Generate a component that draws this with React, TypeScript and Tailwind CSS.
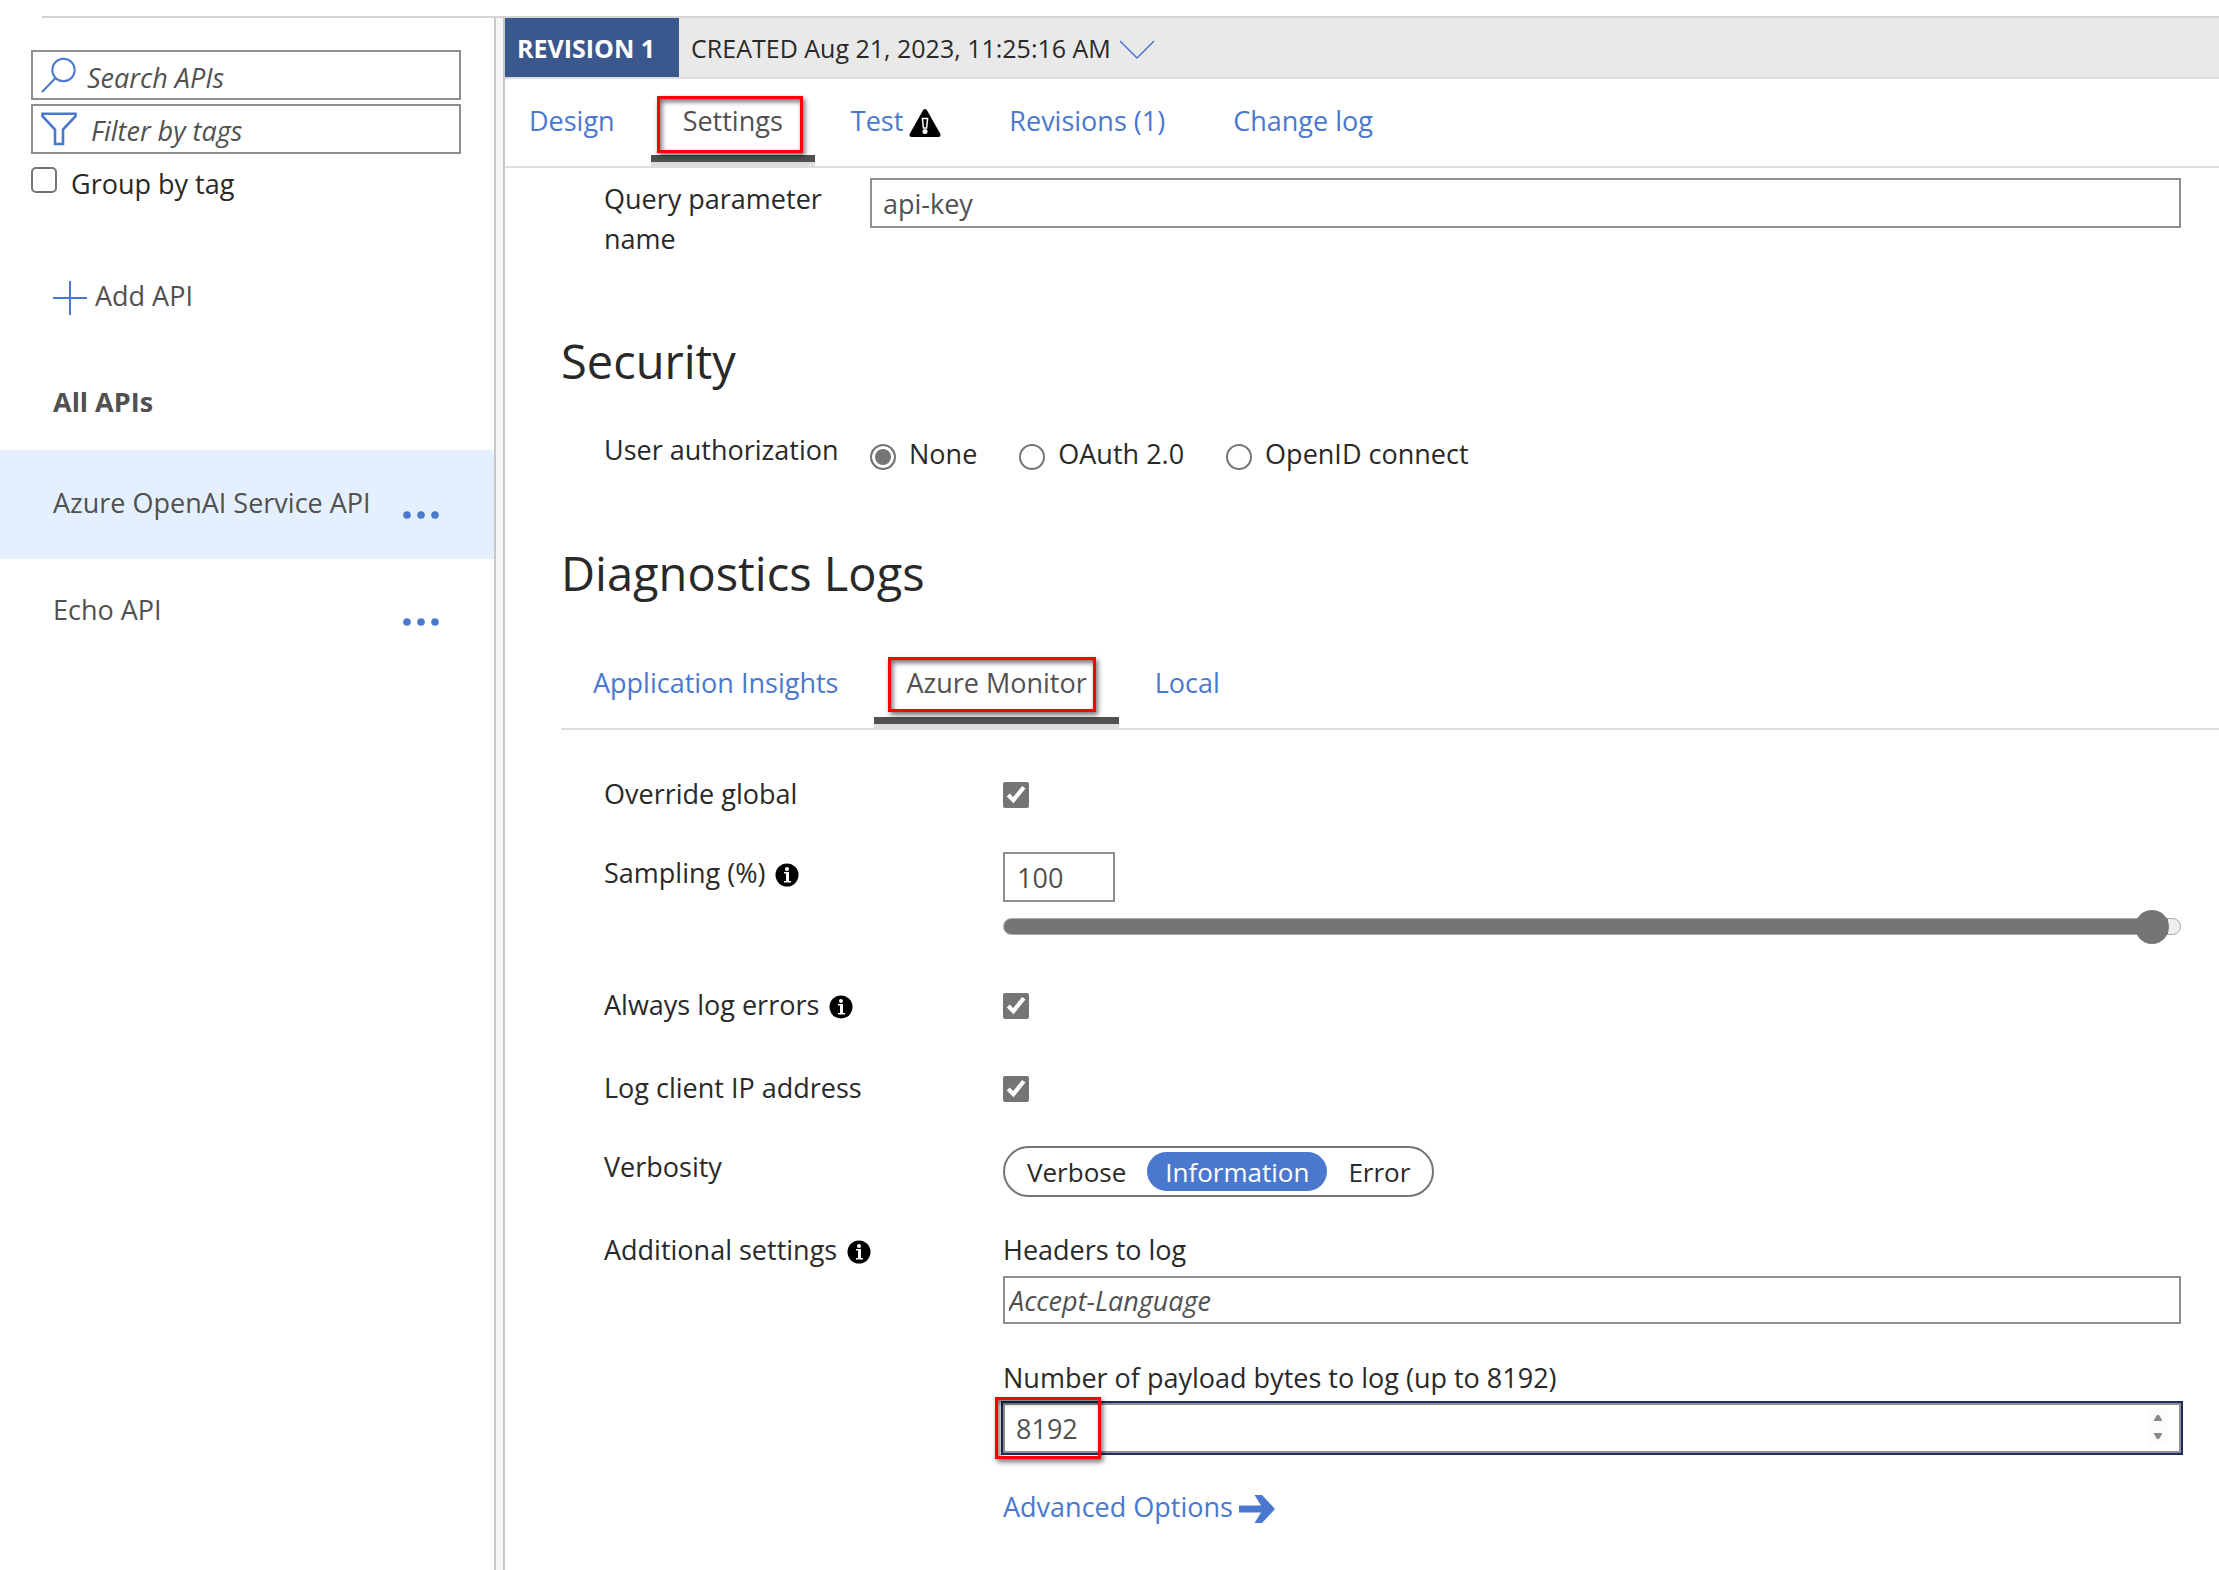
import { useState, type ReactNode } from "react";

const SHADOW_BOX =
  "pointer-events-none absolute border-[3px] border-[#fe0000] shadow-[2px_3px_5px_rgba(0,0,0,0.55),inset_2px_3px_5px_rgba(0,0,0,0.55)]";

function Tab({
  label,
  active,
  onClick,
  icon,
  marker,
}: {
  label: string;
  active: boolean;
  onClick: () => void;
  icon?: ReactNode;
  marker?: string;
}) {
  return (
    <button
      type="button"
      role="tab"
      aria-selected={active}
      onClick={onClick}
      className={`relative flex h-full items-start gap-1.5 whitespace-nowrap ${active ? "text-[#515151]" : "text-[#4a78cf]"}`}
    >
      <span>{label}</span>
      {icon}
      {active && (
        <span className="absolute -inset-x-8 -bottom-0.5 h-[13px] border-t-[7px] border-[#515151] bg-[#dddddd]" />
      )}
      {marker && <span className={`${SHADOW_BOX} ${marker}`} />}
    </button>
  );
}

function WarningIcon() {
  return (
    <svg viewBox="0 0 32 28" className="mt-2 h-7 w-8" aria-hidden="true">
      <path d="M14.2 1Q16-1 17.8 1L31.4 25Q32 28 29.5 28H2.5Q0 28 .6 25Z" fill="#000" />
      <path d="M13.4 9.500h5.200l-1 9.500h-3.200z" fill="#000" stroke="#fff" strokeWidth="1.5" />
      <circle cx="16" cy="22.500" r="2.500" fill="#fff" />
    </svg>
  );
}

function InfoIcon() {
  return (
    <svg viewBox="0 0 24 24" className="mt-1 size-6 shrink-0" aria-hidden="true">
      <circle cx="12" cy="12" r="11.5" fill="#000" />
      <circle cx="12" cy="6" r="2" fill="#fff" />
      <path d="M9 9h5v9h2v1.500H9V18h2v-7.500H9z" fill="#fff" />
    </svg>
  );
}

function Dots({ name }: { name: string }) {
  return (
    <button type="button" aria-label={`More actions for ${name}`} className="mt-6">
      <svg viewBox="0 0 36 8" className="h-2 w-9" fill="#4a78cf">
        <circle cx="4" cy="4" r="3.8" />
        <circle cx="18" cy="4" r="3.8" />
        <circle cx="32" cy="4" r="3.8" />
      </svg>
    </button>
  );
}

function Row({
  id,
  label,
  info,
  className,
  children,
}: {
  id?: string;
  label: string;
  info?: boolean;
  className: string;
  children: ReactNode;
}) {
  return (
    <div className={`flex items-start pl-[43px] ${className}`}>
      <div className="flex w-[399px] shrink-0 items-center gap-2.5">
        <label htmlFor={id}>{label}</label>
        {info && <InfoIcon />}
      </div>
      <div className="min-w-0 flex-1">{children}</div>
    </div>
  );
}

const OPEN_BOX =
  "not-checked:appearance-none not-checked:rounded-[5px] not-checked:border-2 not-checked:border-[#757575] accent-[#757575]";
const CHECK = `mt-2 block size-[26px] ${OPEN_BOX}`;
const FIELD = "border-2 border-[#8f8f8f] bg-white text-[#515151] outline-none";

function Sidebar() {
  return (
    <aside className="w-[494px] shrink-0">
      <div className="space-y-1 pl-[31px] pr-[33px] pt-8">
        <div className={`flex h-[50px] items-center ${FIELD}`}>
          <svg viewBox="0 0 36 36" className="ml-2 size-9" fill="none" stroke="#4a78cf" strokeWidth="2">
            <circle cx="22.5" cy="13" r="11.2" />
            <path d="M14.5 21 1 35" />
          </svg>
          <input
            aria-label="Search APIs"
            placeholder="Search APIs"
            className="h-full min-w-0 flex-1 pl-2.5 pt-1 italic outline-none placeholder:text-[#515151]"
          />
        </div>
        <div className={`flex h-[50px] items-center ${FIELD}`}>
          <svg viewBox="0 0 36 34" className="ml-2 h-[34px] w-9" fill="none" stroke="#4a78cf" strokeWidth="2.6">
            <path d="M1.5 1.8h33v2.4L22 17.5V32h-8V17.5L1.5 4.2z" />
          </svg>
          <input
            aria-label="Filter by tags"
            placeholder="Filter by tags"
            className="h-full min-w-0 flex-1 pl-3.5 pt-0.5 italic outline-none placeholder:text-[#515151]"
          />
        </div>
      </div>
      <div className="mt-2.5 flex items-center pl-[31px]">
        <input id="group" type="checkbox" className={`mb-2 size-[26px] ${OPEN_BOX}`} />
        <label htmlFor="group" className="pl-3.5">
          Group by tag
        </label>
      </div>
      <button type="button" className="mt-[72px] flex items-center pl-[53px] text-[#515151]">
        <svg viewBox="0 0 34 34" className="mt-1 size-[34px]" stroke="#4a78cf" strokeWidth="2">
          <path d="M17 0v34M0 17h34" />
        </svg>
        <span className="pl-2">Add API</span>
      </button>
      <h2 className="mt-[66px] pl-[53px] font-bold text-[#515151]">All APIs</h2>
      <ul className="mt-7 text-[#515151]">
        <li className="flex h-[109px] items-center justify-between bg-[#e4f0fe] pb-1 pl-[53px] pr-[55px]">
          <a href="#azure">Azure OpenAI Service API</a>
          <Dots name="Azure OpenAI Service API" />
        </li>
        <li className="flex h-[105px] items-center justify-between pb-1 pl-[53px] pr-[55px]">
          <a href="#echo">Echo API</a>
          <Dots name="Echo API" />
        </li>
      </ul>
    </aside>
  );
}

const TABS = ["Design", "Settings", "Test", "Revisions (1)", "Change log"];
const LOG_TABS = ["Application Insights", "Azure Monitor", "Local"];
const AUTH = ["None", "OAuth 2.0", "OpenID connect"];
const LEVELS = ["Verbose", "Information", "Error"];

export default function App() {
  const [tab, setTab] = useState("Settings");
  const [logTab, setLogTab] = useState("Azure Monitor");
  const [auth, setAuth] = useState("None");
  const [level, setLevel] = useState("Information");
  const [sampling, setSampling] = useState(100);
  const [bytes, setBytes] = useState(8192);
  const share = (sampling / 101) * 100;

  return (
    <div className="flex min-h-screen flex-col bg-white pt-4 font-['Open_Sans',sans-serif] text-[27px] leading-10 text-[#292929]">
      <div className="ml-[42px] h-0.5 shrink-0 bg-[#d4d4d4]" />
      <div className="flex flex-1">
        <Sidebar />
        <div className="w-[11px] shrink-0 border-x-2 border-[#c8c8c8] bg-[#f5f5f5]" />
        <main className="min-w-0 flex-1">
          <div className="flex h-[61px] items-stretch border-b-2 border-[#dddddd] bg-[#e9e9e9] text-[25px]">
            <span className="flex items-center bg-[#3a588d] pl-3 pr-6 font-bold text-white">REVISION 1</span>
            <button type="button" className="flex items-center pl-3">
              CREATED Aug 21, 2023, 11:25:16 AM
              <svg viewBox="0 0 36 20" className="ml-2 mt-1 h-5 w-9" fill="none" stroke="#4a78cf" strokeWidth="1.5">
                <path d="M1 1l17 17L35 1" />
              </svg>
            </button>
          </div>
          <div role="tablist" className="flex h-[89px] gap-[68px] border-b-2 border-[#dddddd] pl-6 pt-[22px]">
            {TABS.map((t) => (
              <Tab
                key={t}
                label={t}
                active={t === tab}
                onClick={() => setTab(t)}
                icon={t === "Test" && <WarningIcon />}
                marker={t === "Settings" ? "-left-[26px] -right-5 -top-[5px] h-[57px]" : undefined}
              />
            ))}
          </div>

          <div className="pl-14">
            <div className="flex items-start pl-[43px] pr-[38px] pt-[11px]">
              <label htmlFor="param" className="w-[266px] shrink-0 pr-10">
                Query parameter name
              </label>
              <input id="param" defaultValue="api-key" className={`-mt-px h-[50px] min-w-0 flex-1 pl-[11px] ${FIELD}`} />
            </div>

            <h1 className="mt-[67px] text-[47px] leading-[70px]">Security</h1>
            <div className="mt-[34px] flex items-start pl-[43px]">
              <span className="w-[266px] shrink-0">User authorization</span>
              <div role="radiogroup" aria-label="User authorization" className="flex gap-[42px] pt-1">
                {AUTH.map((a) => (
                  <label key={a} className="flex items-center gap-[13px]">
                    <input
                      type="radio"
                      name="auth"
                      checked={a === auth}
                      onChange={() => setAuth(a)}
                      className="mt-1.5 size-[26px] appearance-none rounded-full border-2 border-[#757575] checked:bg-[#757575] checked:shadow-[inset_0_0_0_3px_white]"
                    />
                    {a}
                  </label>
                ))}
              </div>
            </div>

            <h1 className="mt-16 text-[47px] leading-[70px]">Diagnostics Logs</h1>
            <div role="tablist" className="mt-[55px] flex h-[67px] gap-[68px] border-b-2 border-[#dddddd] pl-8">
              {LOG_TABS.map((t) => (
                <Tab
                  key={t}
                  label={t}
                  active={t === logTab}
                  onClick={() => setLogTab(t)}
                  marker={t === "Azure Monitor" ? "-left-[18px] -right-[9px] -top-1.5 h-[55px]" : undefined}
                />
              ))}
            </div>

            <div className="pr-[38px]">
              <Row id="override" label="Override global" className="mt-11">
                <input id="override" type="checkbox" defaultChecked className={CHECK} />
              </Row>
              <Row id="sampling" label="Sampling (%)" info className="mt-[39px]">
                <input
                  id="sampling"
                  value={sampling}
                  onChange={(e) => setSampling(Number(e.target.value) || 0)}
                  className={`-mt-px block h-[50px] w-28 pl-3 ${FIELD}`}
                />
                <input
                  type="range"
                  aria-label="Sampling percentage"
                  min={0}
                  max={101}
                  value={sampling}
                  onChange={(e) => setSampling(Number(e.target.value))}
                  style={{
                    background: `linear-gradient(to right, #757575 ${share}%, #efefef ${share}%)`,
                  }}
                  className="mt-4 block h-[17px] w-full appearance-none rounded-full border border-[#a8a8a8] [&::-webkit-slider-thumb]:size-[34px] [&::-webkit-slider-thumb]:appearance-none [&::-webkit-slider-thumb]:rounded-full [&::-webkit-slider-thumb]:bg-[#757575]"
                />
              </Row>
              <Row id="errors" label="Always log errors" info className="mt-[50px]">
                <input id="errors" type="checkbox" defaultChecked className={CHECK} />
              </Row>
              <Row id="ip" label="Log client IP address" className="mt-[43px]">
                <input id="ip" type="checkbox" defaultChecked className={CHECK} />
              </Row>
              <Row label="Verbosity" className="mt-[39px]">
                <div className="-mt-px flex h-[51px] w-fit items-center rounded-full border-2 border-[#757575] px-1 text-[26px]">
                  {LEVELS.map((l) => (
                    <button
                      key={l}
                      type="button"
                      aria-pressed={l === level}
                      onClick={() => setLevel(l)}
                      className={`flex h-[39px] items-center rounded-full px-[18px] ${l === level ? "mx-[3px] bg-[#4a78cf] text-white" : ""}`}
                    >
                      {l}
                    </button>
                  ))}
                </div>
              </Row>
              <Row label="Additional settings" info className="mt-[33px]">
                <label htmlFor="headers" className="block">
                  Headers to log
                </label>
                <input
                  id="headers"
                  placeholder="Accept-Language"
                  className={`mt-1.5 block h-12 w-full pl-1 italic placeholder:text-[#515151] ${FIELD}`}
                />
                <label htmlFor="bytes" className="mt-[34px] block">
                  Number of payload bytes to log (up to 8192)
                </label>
                <div className="relative mt-[5px]">
                  <input
                    id="bytes"
                    type="number"
                    value={bytes}
                    onChange={(e) => setBytes(Number(e.target.value))}
                    className={`block h-[50px] w-full pl-[11px] ring-2 ring-[#1a2f5e] [appearance:textfield] ${FIELD}`}
                  />
                  <div className="absolute right-[13px] top-1.5 flex h-9 w-5 flex-col items-center justify-between bg-[#fbfbfb] py-1.5">
                    <button type="button" aria-label="Increase" onClick={() => setBytes(bytes + 1)}>
                      <svg viewBox="0 0 8 6" className="block h-1.5 w-2" fill="#8a8a8a">
                        <path d="M3 0h2l3 5v1H0V5z" />
                      </svg>
                    </button>
                    <button type="button" aria-label="Decrease" onClick={() => setBytes(bytes - 1)}>
                      <svg viewBox="0 0 8 6" className="block h-1.5 w-2" fill="#8a8a8a">
                        <path d="M0 0h8v1L5 6H3L0 1z" />
                      </svg>
                    </button>
                  </div>
                  <span className={`${SHADOW_BOX} -left-2 -top-1.5 h-[62px] w-[106px]`} />
                </div>
                <a href="#advanced" className="mt-[34px] flex w-fit items-center gap-1.5 text-[#4a78cf]">
                  Advanced Options
                  <svg viewBox="0 0 36 28" className="mt-1 h-7 w-9" fill="#4a78cf">
                    <path d="M0 10.5h22L15.5 0H23l13 14-13 14h-7.5L22 17.5H0z" />
                  </svg>
                </a>
              </Row>
            </div>
          </div>
        </main>
      </div>
    </div>
  );
}
